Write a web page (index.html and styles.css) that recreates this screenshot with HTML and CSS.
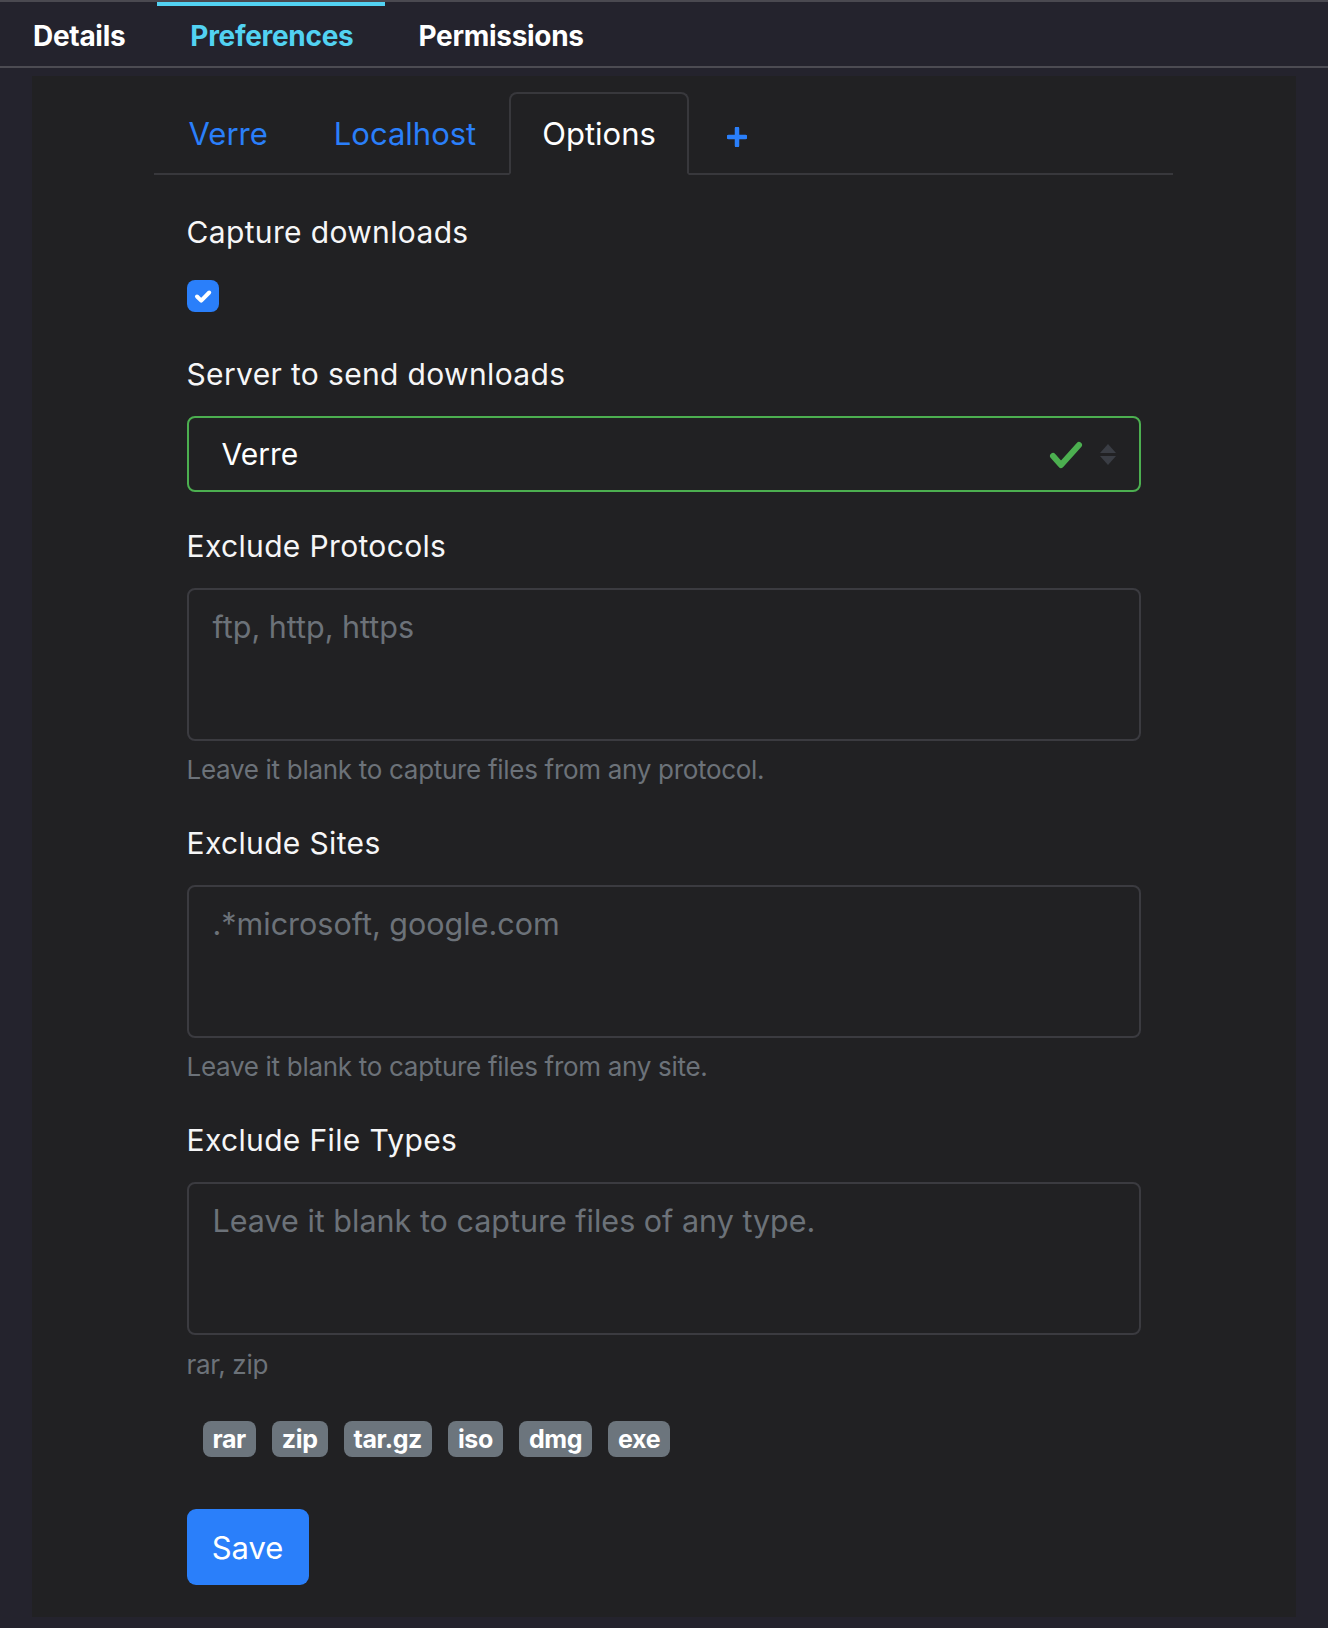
FILE: index.html
```html
<!DOCTYPE html>
<html lang="en">
<head>
<meta charset="utf-8">
<title>Preferences</title>
<link rel="stylesheet" href="styles.css">
</head>
<body>
<header class="topbar">
  <nav class="main-tabs">
    <a class="main-tab">Details</a>
    <a class="main-tab active">Preferences</a>
    <a class="main-tab">Permissions</a>
  </nav>
</header>
<main class="panel">
  <div class="container">
    <ul class="nav-tabs">
      <li><a class="nav-link first">Verre</a></li>
      <li><a class="nav-link">Localhost</a></li>
      <li><a class="nav-link active">Options</a></li>
      <li><a class="nav-link plus-link"><svg class="plus-icon" width="20" height="20" viewBox="0 0 20 20"><path d="M10 1.5v17M1.5 10h17" stroke="#2a7ffa" stroke-width="4.5" stroke-linecap="round" fill="none"/></svg></a></li>
    </ul>
    <form class="tab-content">
      <div class="group group-check">
        <label class="form-label">Capture downloads</label>
        <span class="checkbox"><svg width="32" height="32" viewBox="0 0 32 32"><path d="M10 16.5l4.2 4.2 8-8.2" stroke="#fff" stroke-width="4" stroke-linecap="round" stroke-linejoin="round" fill="none"/></svg></span>
      </div>
      <div class="group group-select">
        <label class="form-label">Server to send downloads</label>
        <div class="select">
          <span class="select-value">Verre</span>
          <svg class="valid-icon" width="34" height="28" viewBox="0 0 34 28"><polyline points="4,15 12,24 30,4" stroke="#4caf50" stroke-width="6" stroke-linecap="round" stroke-linejoin="round" fill="none"/></svg>
          <svg class="arrows" width="16" height="21" viewBox="0 0 16 21"><path d="M0 9L8 0L16 9Z M0 12L16 12L8 21Z" fill="#3a3d44"/></svg>
        </div>
      </div>
      <div class="group group-text">
        <label class="form-label">Exclude Protocols</label>
        <div class="textarea"><span class="placeholder">ftp, http, https</span></div>
        <div class="form-text">Leave it blank to capture files from any protocol.</div>
      </div>
      <div class="group group-text">
        <label class="form-label">Exclude Sites</label>
        <div class="textarea"><span class="placeholder">.*microsoft, google.com</span></div>
        <div class="form-text">Leave it blank to capture files from any site.</div>
      </div>
      <div class="group group-text group-last">
        <label class="form-label">Exclude File Types</label>
        <div class="textarea"><span class="placeholder">Leave it blank to capture files of any type.</span></div>
        <div class="form-text">rar, zip</div>
      </div>
      <div class="badges">
        <span class="badge">rar</span>
        <span class="badge">zip</span>
        <span class="badge">tar.gz</span>
        <span class="badge">iso</span>
        <span class="badge">dmg</span>
        <span class="badge">exe</span>
      </div>
      <button type="button" class="btn-save">Save</button>
    </form>
  </div>
</main>
</body>
</html>
```
FILE: styles.css
```css
* { box-sizing: border-box; }
html, body {
  margin: 0;
  padding: 0;
}
body {
  background: #24232d;
  font-family: Inter, "Noto Sans", "Liberation Sans", sans-serif;
  color: #f4f4f5;
  height: 1628px;
  overflow: hidden;
}
.topbar {
  border-top: 2px solid #4a4950;
  border-bottom: 2px solid #4c4b52;
  height: 68px;
  background: #24232d;
}
.main-tabs {
  display: flex;
  height: 64px;
}
.main-tab {
  display: flex;
  align-items: center;
  padding: 3px 32px 0 33px;
  font-size: 28px;
  font-weight: 700;
  color: #ffffff;
  letter-spacing: -0.3px;
}
.main-tab.active {
  color: #52d2f2;
  box-shadow: inset 0 4px 0 #52d2f2;
}
.panel {
  margin: 8px 32px 0 32px;
  background: #212123;
  padding: 16px 0 32px;
}
.container {
  width: 1021px;
  margin: 0 auto;
  padding-left: 0;
  padding-right: 2px;
}
.nav-tabs {
  list-style: none;
  margin: 0;
  padding: 0;
  display: flex;
  border-bottom: 2px solid #38383c;
}
.nav-link {
  display: block;
  height: 83px;
  padding: 0 31px;
  line-height: 79px;
  border: 2px solid transparent;
  border-radius: 8px 8px 0 0;
  margin-bottom: -2px;
  font-size: 31px;
  color: #2a7ffa;
}
.nav-link.first { padding-left: 33px; }
.nav-link.active {
  color: #ffffff;
  border-color: #38383c #38383c #212123;
  background: #212123;
}
.plus-link {
  padding: 0 0 0 36px;
  display: flex;
  align-items: center;
}
.plus-icon { display: block; margin-top: 6px; }
.tab-content {
  padding: 35px 32px 0 33px;
}
.form-label {
  display: block;
  font-size: 30px;
  line-height: 45px;
  margin-bottom: 17px;
  color: #f6f6f7;
  letter-spacing: 0.35px;
}
.group { margin-bottom: 32px; }
.group-check { margin-bottom: 40px; }
.group-check .form-label { margin-bottom: 25px; }
.checkbox {
  display: block;
  width: 32px;
  height: 32px;
  border-radius: 8px;
  background: #2a7ffa;
}
.checkbox svg { display: block; }
.group-select { margin-bottom: 32px; }
.group-select .form-label { margin-bottom: 19px; }
.group-text .form-label { margin-bottom: 19px; }
.select {
  display: flex;
  align-items: center;
  height: 76px;
  border: 2px solid #4caf50;
  border-radius: 8px;
  padding: 0 23px 0 33px;
}
.select-value {
  flex: 1;
  font-size: 30px;
  color: #ffffff;
}
.valid-icon { display: block; margin-right: 17px; margin-top: 2px; }
.arrows { display: block; }
.textarea {
  height: 153px;
  border: 2px solid #3b3b40;
  border-radius: 8px;
  padding: 14px 24px;
  font-size: 30.5px;
  line-height: 45px;
}
.placeholder { color: #6c7279; }
.form-text {
  margin-top: 9px;
  font-size: 26px;
  line-height: 39px;
  color: #6c7279;
  letter-spacing: -0.3px;
}
.group-last { margin-bottom: 37px; }
.group-last .form-text { margin-top: 10px; }
.badges {
  display: flex;
  gap: 16px;
  padding-left: 16px;
  margin-bottom: 52px;
}
.badge {
  display: block;
  height: 36px;
  line-height: 36px;
  padding: 0 10px;
  border-radius: 8px;
  background: #6c757d;
  color: #ffffff;
  font-size: 25px;
  font-weight: 700;
  letter-spacing: -0.4px;
}
.btn-save {
  display: block;
  width: 122px;
  height: 76px;
  border: none;
  border-radius: 9px;
  background: #2a7ffa;
  color: #ffffff;
  font-family: inherit;
  font-size: 31px;
  padding: 0;
  margin-left: 0;
}
```
